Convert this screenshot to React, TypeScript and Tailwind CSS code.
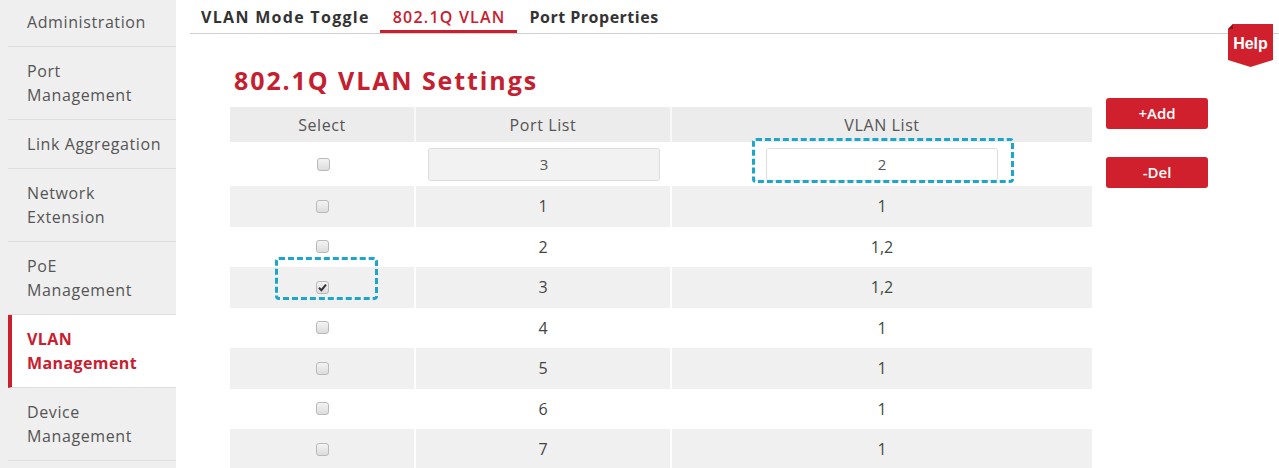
import React from "react";

const menu: { label: string[]; active?: boolean }[] = [
  { label: ["Administration"] },
  { label: ["Port", "Management"] },
  { label: ["Link Aggregation"] },
  { label: ["Network", "Extension"] },
  { label: ["PoE", "Management"] },
  { label: ["VLAN", "Management"], active: true },
  { label: ["Device", "Management"] },
];

const rows: { port: string; vlan: string; checked?: boolean }[] = [
  { port: "1", vlan: "1" },
  { port: "2", vlan: "1,2" },
  { port: "3", vlan: "1,2", checked: true },
  { port: "4", vlan: "1" },
  { port: "5", vlan: "1" },
  { port: "6", vlan: "1" },
  { port: "7", vlan: "1" },
];

function Check({ checked }: { checked?: boolean }) {
  return (
    <span className="relative inline-block w-[13px] h-[13px] rounded-[3px] border border-[#b9b9b9] bg-gradient-to-b from-[#f4f4f4] to-[#dcdcdc]">
      {checked && (
        <svg viewBox="0 0 13 13" className="absolute -left-px -top-px w-[13px] h-[13px]">
          <path d="M3 6.8 L5.4 9.2 L10 3.6" fill="none" stroke="#333" strokeWidth="2" />
        </svg>
      )}
    </span>
  );
}

export default function App() {
  return (
    <div
      className="relative w-[1279px] h-[468px] overflow-hidden bg-white flex"
      style={{ fontFamily: '"Open Sans", "Noto Sans", sans-serif' }}
    >
      {/* side navigation */}
      <aside className="w-[176px] shrink-0 bg-[#efefef] pl-[8px]">
        <div className="-mt-[2px]">
          {menu.map((m, i) => (
            <div
              key={i}
              className={
                m.active
                  ? "bg-white border-l-4 border-[#c8202f] pl-[15px] py-[12px] text-[16px] leading-[24px] tracking-[0.4px] font-bold text-[#c8202f] border-b border-b-[#dedede]"
                  : "pl-[19px] py-[12px] text-[16px] leading-[24px] tracking-[0.6px] text-[#555] border-b border-[#dedede]"
              }
            >
              {m.label.map((l) => (
                <div key={l}>{l}</div>
              ))}
            </div>
          ))}
        </div>
      </aside>

      {/* main area */}
      <main className="flex-1 pl-[14px]">
        <nav className="h-[34px] flex items-stretch border-b border-[#cfcfcf]">
          <div className="pl-[11px] pr-[10px] flex items-center text-[16px] tracking-[1.3px] font-bold text-[#333]">
            VLAN Mode Toggle
          </div>
          <div className="pl-[13px] pr-[12px] flex items-center text-[16px] tracking-[1.2px] font-semibold text-[#c8202f] border-b-[3px] border-[#c8202f] pt-[3px]">
            802.1Q VLAN
          </div>
          <div className="pl-[12px] flex items-center text-[16px] tracking-[0.5px] font-bold text-[#333]">
            Port Properties
          </div>
        </nav>

        <div className="flex">
          <section className="ml-[40px] w-[862px]">
            <h1 className="pt-[30px] h-[73px] pl-[4px] text-[25px] leading-[32px] tracking-[1.9px] font-bold text-[#c4202f]">
              802.1Q VLAN Settings
            </h1>

            <div className="relative text-[16px] text-[#444]">
              {/* header */}
              <div className="flex h-[35px] bg-[#ececec] text-[#555] tracking-[0.6px]">
                <div className="w-[186px] flex items-center justify-center border-r-2 border-[#f8f8f8]">Select</div>
                <div className="w-[256px] flex items-center justify-center border-r-2 border-[#f8f8f8]">Port List</div>
                <div className="flex-1 flex items-center justify-center">VLAN List</div>
              </div>

              {/* new entry row */}
              <div className="flex h-[44px] bg-white">
                <div className="w-[186px] flex items-center justify-center">
                  <Check />
                </div>
                <div className="w-[256px] flex items-center justify-center">
                  <div className="w-[232px] h-[33px] rounded-[3px] border border-[#dddddd] bg-[#f2f2f2] flex items-center justify-center text-[15px] text-[#555]">
                    3
                  </div>
                </div>
                <div className="flex-1 flex items-center justify-center">
                  <div className="w-[232px] h-[33px] rounded-[3px] border border-[#dddddd] bg-white flex items-center justify-center text-[15px] text-[#555]">
                    2
                  </div>
                </div>
              </div>

              {rows.map((r, i) => (
                <div key={r.port} className={"flex h-[40.5px] " + (i % 2 === 0 ? "bg-[#f0f0f0]" : "bg-white")}>
                  <div className="w-[186px] flex items-center justify-center border-r-2 border-white">
                    <Check checked={r.checked} />
                  </div>
                  <div className="w-[256px] flex items-center justify-center border-r-2 border-white">{r.port}</div>
                  <div className="flex-1 flex items-center justify-center text-[#3d4a3f]">{r.vlan}</div>
                </div>
              ))}

              {/* highlight frames */}
              <div className="absolute left-[522px] top-[31px] w-[262px] h-[45px] rounded-[4px] border-[3px] border-dashed border-[#1ba7cc]" />
              <div className="absolute left-[45px] top-[150px] w-[103px] h-[43px] rounded-[4px] border-[3px] border-dashed border-[#1ba7cc]" />
            </div>
          </section>

          <div className="ml-[14px] pt-[64px] flex flex-col gap-[28px]">
            <button className="w-[102px] h-[31px] rounded-[3px] bg-[#d0202d] text-white text-[15px] font-semibold">
              +Add
            </button>
            <button className="w-[102px] h-[31px] rounded-[3px] bg-[#d0202d] text-white text-[15px] font-semibold">
              -Del
            </button>
          </div>
        </div>
      </main>

      {/* help tag */}
      <div className="absolute left-[1228px] top-[24px] w-[45px] h-[43px]">
        <svg viewBox="0 0 45 43" className="absolute inset-0 w-[45px] h-[43px]">
          <path d="M5 0 H45 V36 L22.5 43 L0 36 V5 Z" fill="#d0202d" />
          <path d="M0 5 L5 0 V5 Z" fill="#8e1420" />
        </svg>
        <div
          className="relative pt-[11px] text-center text-[16px] leading-[18px] font-bold text-white"
          style={{ fontFamily: '"Liberation Sans", Arial, sans-serif' }}
        >
          Help
        </div>
      </div>
    </div>
  );
}
